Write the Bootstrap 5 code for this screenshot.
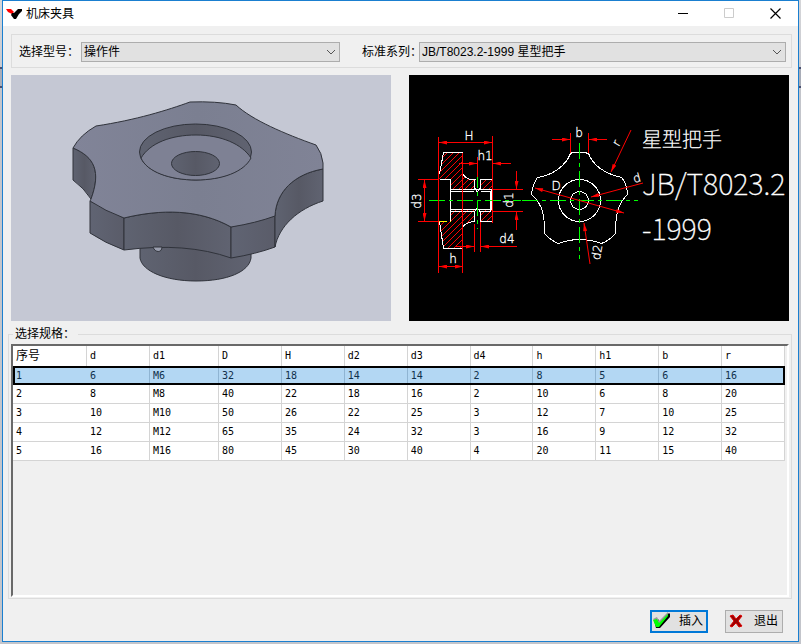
<!DOCTYPE html>
<html lang="zh-CN">
<head>
<meta charset="utf-8">
<meta name="viewport" content="width=device-width, initial-scale=1">
<title>机床夹具</title>
<link href="https://cdn.jsdelivr.net/npm/bootstrap@5.3.0/dist/css/bootstrap.min.css" rel="stylesheet">
<style>
  body { background: linear-gradient(#d5d6d9 0, #c9cad0 67px, #4a5070 67px, #4a5070 69px, #a9adb8 69px, #a9adb8 86px, #4a5070 86px, #4a5070 88px, #c3c5cb 88px); color: #000; font: 12px/16px "Liberation Sans", "Noto Sans CJK SC", sans-serif; }
  .app-window { min-height: 100vh; padding: 0 2px 2px; }
  .app-frame { border: 1px solid #1a7fd0; background: #f0f0f0; }
  .title-bar { height: 25px; padding-left: 3px; }
  .title-bar h1 { font-size: 12px; line-height: 16px; }
  .win-btn { width: 46px; height: 25px; border: 0; background: none; padding: 0; }
  .win-btn svg { display: block; margin: 0 auto; }
  .filter-group { gap: 22px; margin: 8px 6px 7px 8px; padding: 7px 5px 5px 7px; border: 1px solid #dcdcdc; }
  .form-select.combo { min-height: 0; height: 20px; border: 1px solid #adadad; border-radius: 0; background-color: #e1e1e1; color: #000; font-size: 12px; line-height: 16px; padding: 1px 20px 1px 2px;
    background-image: url("data:image/svg+xml,%3Csvg xmlns='http://www.w3.org/2000/svg' viewBox='0 0 10 6'%3E%3Cpath d='M1 1l4 4 4-4' fill='none' stroke='%23555'/%3E%3C/svg%3E"); background-size: 10px 6px; background-position: right 3px center; }
  .filter-model { flex: 321 1 0; }
  .filter-model label { flex: 0 0 62px; }
  .filter-series { flex: 424 1 0; }
  .filter-series label { flex: 0 0 57px; min-width: 0; }
  .previews { gap: 18px; padding: 0 9px 0 8px; margin-bottom: 13px; }
  .previews svg { flex: 1 1 0; min-width: 0; display: block; }
  .cad-text { font-family: "Noto Sans CJK SC", sans-serif; font-weight: 100; fill: #fff; stroke: #fff; stroke-width: .4px; }
  .cad-label { font-family: "DejaVu Sans", sans-serif; font-size: 12px; font-weight: 200; fill: #fff; stroke: #fff; stroke-width: .3px; text-anchor: middle; }
  .spec-group { margin: 0 6px 0 5px; border: 1px solid #dcdcdc; padding: 0 2px 1px; }
  .spec-group h2 { font-size: 12px; line-height: 16px; margin: -9px 0 2px 2px; padding: 0 3px 0 2px; background: #f0f0f0; }
  .grid-well { border: 2px solid; border-color: #696969 #fff #fff #696969; padding-right: 2px; }
  .spec-table { table-layout: fixed; border-collapse: separate; border-spacing: 0; font: 10px/14px "DejaVu Sans Mono", "Noto Sans CJK SC", monospace; background: #fff; }
  .spec-table th, .spec-table td { font-weight: 400; height: 19px; padding: 2px 3px; border: 0 solid #d4d4d4; border-right-width: 1px; border-bottom-width: 1px; }
  .spec-table th { height: 20px; border-bottom-width: 0; }
  .spec-table th:first-child { font-size: 12px; }
  .spec-table tbody td:first-child { border-right: 0; }
  .spec-table .picked td { background: #b3d7f3; color: #10304c; border-right-color: #8fb4d2; border-bottom: 0; }
  .spec-table .picked { outline: 2px solid #000; outline-offset: -2px; }
  .footer-bar { gap: 17px; padding: 11px 15px 8px; }
  .cmd-btn { width: 58px; height: 23px; border: 1px solid #adadad; background: #e1e1e1; color: #000; font-size: 12px; line-height: 16px; padding: 0 4px 2px 3px; }
  .cmd-btn.primary-cmd { border: 2px solid #0078d7; padding: 0 3px 2px 1px; }
</style>
</head>
<body>
<div class="app-window d-flex flex-column">
 <main class="app-frame d-flex flex-column flex-grow-1">
  <header class="title-bar bg-white d-flex align-items-center">
    <svg width="16" height="12" viewBox="0 0 16 12" aria-hidden="true"><path d="M0 1h5l3 3-2 2-4-2z" fill="#f00"/><path d="M16 1h-4L8 5H6L5 7l3 4h2l3-5 3-3z" fill="#000"/></svg>
    <h1 class="m-0 ms-1 flex-grow-1 fw-normal">机床夹具</h1>
    <button class="win-btn" type="button" aria-label="最小化"><svg width="11" height="11"><path d="M0 5.500h10" stroke="#000"/></svg></button>
    <button class="win-btn" type="button" aria-label="最大化" disabled><svg width="11" height="11"><path d="M.5.500h9v9h-9z" fill="none" stroke="#ccc"/></svg></button>
    <button class="win-btn" type="button" aria-label="关闭"><svg width="11" height="11"><path d="M.5.500l10 10m0-10l-10 10" stroke="#000" stroke-width="1.200"/></svg></button>
  </header>
  <form class="filter-group d-flex align-items-center">
    <div class="filter-model d-flex align-items-center">
      <label for="model" class="text-nowrap">选择型号：</label>
      <select id="model" class="form-select combo"><option>操作件</option></select>
    </div>
    <div class="filter-series d-flex align-items-center">
      <label for="series" class="text-nowrap">标准系列：</label>
      <select id="series" class="form-select combo"><option>JB/T8023.2-1999 星型把手</option></select>
    </div>
  </form>
  <section class="previews d-flex">
    <svg viewBox="0 0 380 246" role="img" aria-label="三维预览">
      <defs>
        <linearGradient id="top" x1="0" x2="1"><stop offset="0" stop-color="#818498"/><stop offset=".5" stop-color="#7b7f91"/><stop offset="1" stop-color="#808396"/></linearGradient>
        <linearGradient id="side" x1="0" x2="1"><stop offset="0" stop-color="#5f6371"/><stop offset=".5" stop-color="#575965"/><stop offset="1" stop-color="#606371"/></linearGradient>
        <linearGradient id="facet" x1="0" x2="1"><stop offset="0" stop-color="#606473"/><stop offset="1" stop-color="#5a5c69"/></linearGradient>
      </defs>
      <path fill="#c5c8d4" d="M0 0h380v246H0z"/>
      <g stroke="#30333b" stroke-width="1" stroke-linejoin="round">
        <path fill="url(#side)" d="M129 165v18c2 13 25 23 56 23s53-9 55-23v-15z"/>
        <path fill="url(#side)" d="M62 73v32q11 8 18 19C90 97 84 82 62 73z"/>
        <path fill="url(#facet)" d="M79 126v32q15 10 34 17v-32z"/>
        <path fill="url(#side)" d="M113 143v32Q175 167 220 183v-31C188 134 150 134 113 143z"/>
        <path fill="url(#facet)" d="M220 152v31q25-4 44-11v-31z"/>
        <path fill="url(#side)" d="M264 141v31C268 151 287 134 312 126V94C283 99 265 117 264 141z"/>
        <path fill="#9a9eae" d="M142 172h9c0 6-7 6-9 0z"/>
        <path fill="url(#top)" d="M179 27Q205 26 225 30C241 45 274 59 305 70Q311 78 312 88v6C283 99 265 117 264 141Q245 148 220 152C188 134 150 134 113 143Q94 136 79 126L80 124C90 97 84 82 62 73Q69 60 85 51C125 45 157 35 179 27z"/>
        <ellipse cx="184.500" cy="77" rx="56" ry="28" fill="url(#side)"/>
        <path fill="#7e8194" d="M130 83C139 68 160 60 185 60s46 9 55 23c-7 14-29 22-55 22s-49-8-55-22z"/>
        <ellipse cx="184.500" cy="88.500" rx="24" ry="12" fill="url(#side)"/>
      </g>
    </svg>
    <svg viewBox="409 75 380 246" role="img" aria-label="JB/T8023.2-1999 星型把手 尺寸图">
      <defs>
        <pattern id="hatch" width="6" height="6" patternUnits="userSpaceOnUse"><path d="M-1 7L7-1M-1 1l2-2M5 7l2-2" stroke="red" stroke-width="1"/></pattern>
        <marker id="arrow" viewBox="0 0 8 4" markerWidth="9" markerHeight="4" refX="8" refY="2" orient="auto-start-reverse" markerUnits="userSpaceOnUse"><path d="M0 0l8 2-8 2z" fill="red"/></marker>
      </defs>
      <path d="M409 75h380v246H409z"/>
      <path d="M443 152.500h19v37h-12v-10h-11zM462 173q2 5 10 7h3v9h-13zM480 180h12v9h-12zM451 210h11v38h-19l-4-27h12zM462 210h13v12q-9 0-13 5zM480 210h12v12h-12z" fill="url(#hatch)"/>
      <g fill="none" stroke="#fff" shape-rendering="crispEdges">
        <path d="M439.500 174l4-21.500h19v96h-19l-4-27M439.500 179.500h11v32M450.500 179.500v42M462.500 173q3 6 9 6.500h4M480 179.500h12M462.500 228q2-6 12.500-6.500M480 221.500h12M450.500 189.500h41v20h-41M474.500 180v8l3 4 3-4v-8M474.500 222v-10l3-4 3 4v10M451 191.500h23M481 191.500h10M451 211.500h23M481 211.500h10M490.500 191v20"/>
        <path d="M570.500 153.500q2-1.500 8-1.500t10 1.500c5 13 16 20 33 24 4 4 6 12 6 17-10 10-12 20-12 39q-6 7-14 10-22-8-43 0-8-3-14-10c0-18-1-28-13-39q1-10 6-17c14-2 28-11 33-24z"/>
        <circle cx="579.500" cy="200.500" r="21"/><circle cx="579.500" cy="200.500" r="9"/>
      </g>
      <path d="M439 221.500h12" stroke="#ff0" stroke-dasharray="8 3"/>
      <g stroke="#0f0" fill="none" stroke-dasharray="16 4 4 4" shape-rendering="crispEdges"><path d="M429 200.500h92M522 200.500h116M477.500 172v57M579.500 143v116"/></g>
      <g stroke="red" fill="none" shape-rendering="crispEdges">
        <path d="M438.500 137v136M492.500 136v87M462.500 153v120M439 142.500h53M439 266.500h24M418 179.500h21M418 221.500h21M424.500 181v39M459 163.500h16M494 163.500h17M477.500 157v20M474.500 224v28M480.500 222v30M455 246.500h20M482 246.500h35M493 189.500h30M493 211.500h30M516.500 171v16M516.500 213v17M570.500 133v20M588.500 133v20M552 139.500h17M589 139.500h18"/>
      </g>
      <g stroke="red" fill="none">
        <path marker-start="url(#arrow)" marker-end="url(#arrow)" d="M439 142.500h53"/><path marker-start="url(#arrow)" marker-end="url(#arrow)" d="M439 266.500h24"/><path marker-start="url(#arrow)" marker-end="url(#arrow)" d="M424.500 180v41"/>
        <path marker-end="url(#arrow)" d="M552 139.500h18"/><path marker-end="url(#arrow)" d="M606 139.500h-17"/><path marker-end="url(#arrow)" d="M459 163.500h18"/><path marker-end="url(#arrow)" d="M511 163.500h-18"/><path marker-end="url(#arrow)" d="M455 246.500h19"/><path marker-end="url(#arrow)" d="M516 246.500h-35"/><path marker-end="url(#arrow)" d="M516.500 171v18"/><path marker-end="url(#arrow)" d="M516.500 230v-18"/>
        <path marker-start="url(#arrow)" marker-end="url(#arrow)" d="M535 188l89 25"/><path marker-start="url(#arrow)" d="M591 197l52-14"/><path marker-start="url(#arrow)" d="M584 223l6 41"/><path marker-start="url(#arrow)" d="M611 172l20-42"/>
      </g>
      <g class="cad-label">
        <text x="469" y="140">H</text><text x="485" y="160">h1</text><text x="507" y="243">d4</text><text x="453" y="263">h</text><text x="579" y="137">b</text><text x="556" y="190">D</text>
        <text transform="translate(421 201) rotate(-90)">d3</text><text transform="translate(513 200) rotate(-90)">d1</text><text transform="translate(620 145) rotate(-60)">r</text><text transform="translate(638 182) rotate(-15)">d</text><text transform="translate(601 253) rotate(-80)">d2</text>
      </g>
      <g class="cad-text"><text x="642" y="147" font-size="20">星型把手</text><text x="642" y="195" font-size="29">JB/T8023.2</text><text x="642" y="240" font-size="29">-1999</text></g>
    </svg>
  </section>
  <section class="spec-group d-flex flex-column flex-grow-1" aria-labelledby="spec-title">
    <h2 id="spec-title" class="align-self-start fw-normal">选择规格：</h2>
    <div class="grid-well flex-grow-1">
     <table class="spec-table w-100">
      <colgroup><col style="width:9.590%"><col style="width:8.160%"><col style="width:8.940%"><col span="9"></colgroup>
      <thead><tr><th>序号</th><th>d</th><th>d1</th><th>D</th><th>H</th><th>d2</th><th>d3</th><th>d4</th><th>h</th><th>h1</th><th>b</th><th>r</th></tr></thead>
      <tbody>
       <tr class="picked"><td>1</td><td>6</td><td>M6</td><td>32</td><td>18</td><td>14</td><td>14</td><td>2</td><td>8</td><td>5</td><td>6</td><td>16</td></tr>
       <tr><td>2</td><td>8</td><td>M8</td><td>40</td><td>22</td><td>18</td><td>16</td><td>2</td><td>10</td><td>6</td><td>8</td><td>20</td></tr>
       <tr><td>3</td><td>10</td><td>M10</td><td>50</td><td>26</td><td>22</td><td>25</td><td>3</td><td>12</td><td>7</td><td>10</td><td>25</td></tr>
       <tr><td>4</td><td>12</td><td>M12</td><td>65</td><td>35</td><td>24</td><td>32</td><td>3</td><td>16</td><td>9</td><td>12</td><td>32</td></tr>
       <tr><td>5</td><td>16</td><td>M16</td><td>80</td><td>45</td><td>30</td><td>40</td><td>4</td><td>20</td><td>11</td><td>15</td><td>40</td></tr>
      </tbody>
     </table>
    </div>
  </section>
  <footer class="footer-bar d-flex justify-content-end">
    <button type="button" class="cmd-btn primary-cmd d-flex align-items-center justify-content-between"><svg width="17" height="17" viewBox="0 0 17 17" aria-hidden="true"><path d="M1 8l4-1 2 3 9-9 1 1v3L7 16H3z" fill="#000"/><path d="M0 7l4-2 2 4 9-9v2L6 12H4z" fill="#999"/><path d="M0 8l4-1 2 4 9-9v2L6 15H3z" fill="#0f0"/></svg>插入</button>
    <button type="button" class="cmd-btn d-flex align-items-center justify-content-between"><svg width="14" height="14" viewBox="0 0 14 14" aria-hidden="true"><path d="M1 2l3-1 3 4 4-4 2 1-4 5 4 5-3 1-3-4-4 4-2-1 4-5z" fill="#900" stroke="#d00"/></svg>退出</button>
  </footer>
 </main>
</div>
<script src="https://cdn.jsdelivr.net/npm/bootstrap@5.3.0/dist/js/bootstrap.bundle.min.js"></script>
</body>
</html>
